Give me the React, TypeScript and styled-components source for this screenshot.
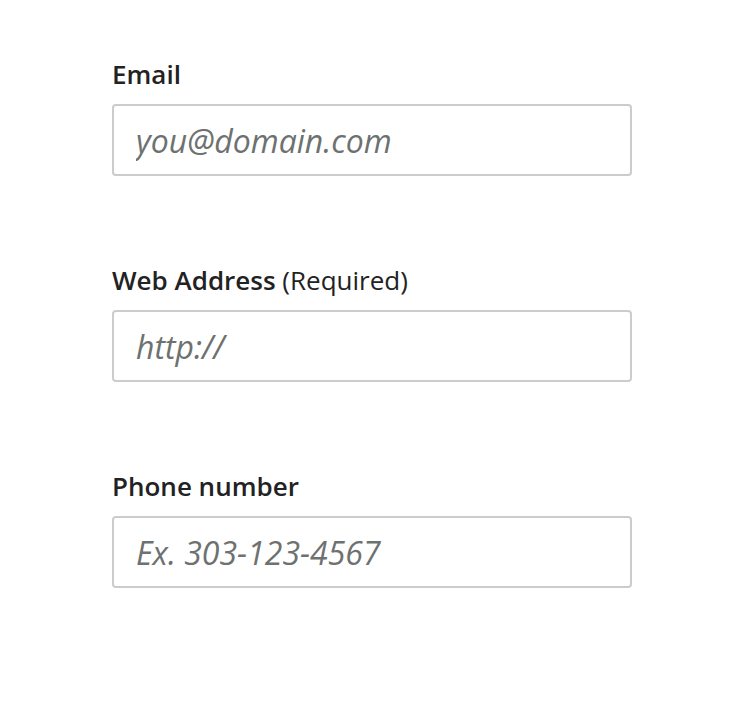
import React from "react";
import styled, { createGlobalStyle } from "styled-components";

const GlobalStyle = createGlobalStyle`
  body {
    margin: 0;
    background: #fff;
    font-family: "Open Sans", "Liberation Sans", sans-serif;
  }
`;

const fields = [
  { id: "email", label: "Email", placeholder: "you@domain.com" },
  { id: "web", label: "Web Address", note: "(Required)", placeholder: "http://" },
  { id: "phone", label: "Phone number", placeholder: "Ex. 303-123-4567" },
];

const App = () => {
  return (
    <>
      <GlobalStyle />
      <Form>
        {fields.map((f) => (
          <Field key={f.id}>
            <Label htmlFor={f.id}>
              {f.label}
              {f.note && <Note> {f.note}</Note>}
            </Label>
            <Input id={f.id} placeholder={f.placeholder} />
          </Field>
        ))}
      </Form>
    </>
  );
};

export default App;

const Form = styled.form`
  display: flex;
  flex-direction: column;
  gap: 86px;
  padding: 56px 0 0 112px;
`;

const Field = styled.div`
  display: flex;
  flex-direction: column;
  gap: 12px;
  width: 520px;
`;

const Label = styled.label`
  font-size: 26px;
  line-height: 36px;
  font-weight: 600;
  color: #222;
`;

const Note = styled.span`
  font-weight: 400;
`;

const Input = styled.input`
  box-sizing: border-box;
  width: 520px;
  height: 72px;
  border: 2px solid #ccc;
  border-radius: 4px;
  padding: 0 22px;
  font-family: "Open Sans", "Liberation Sans", sans-serif;
  font-size: 32px;
  color: #333;
  outline: none;

  &::placeholder {
    font-style: italic;
    color: #6d7170;
  }
`;
